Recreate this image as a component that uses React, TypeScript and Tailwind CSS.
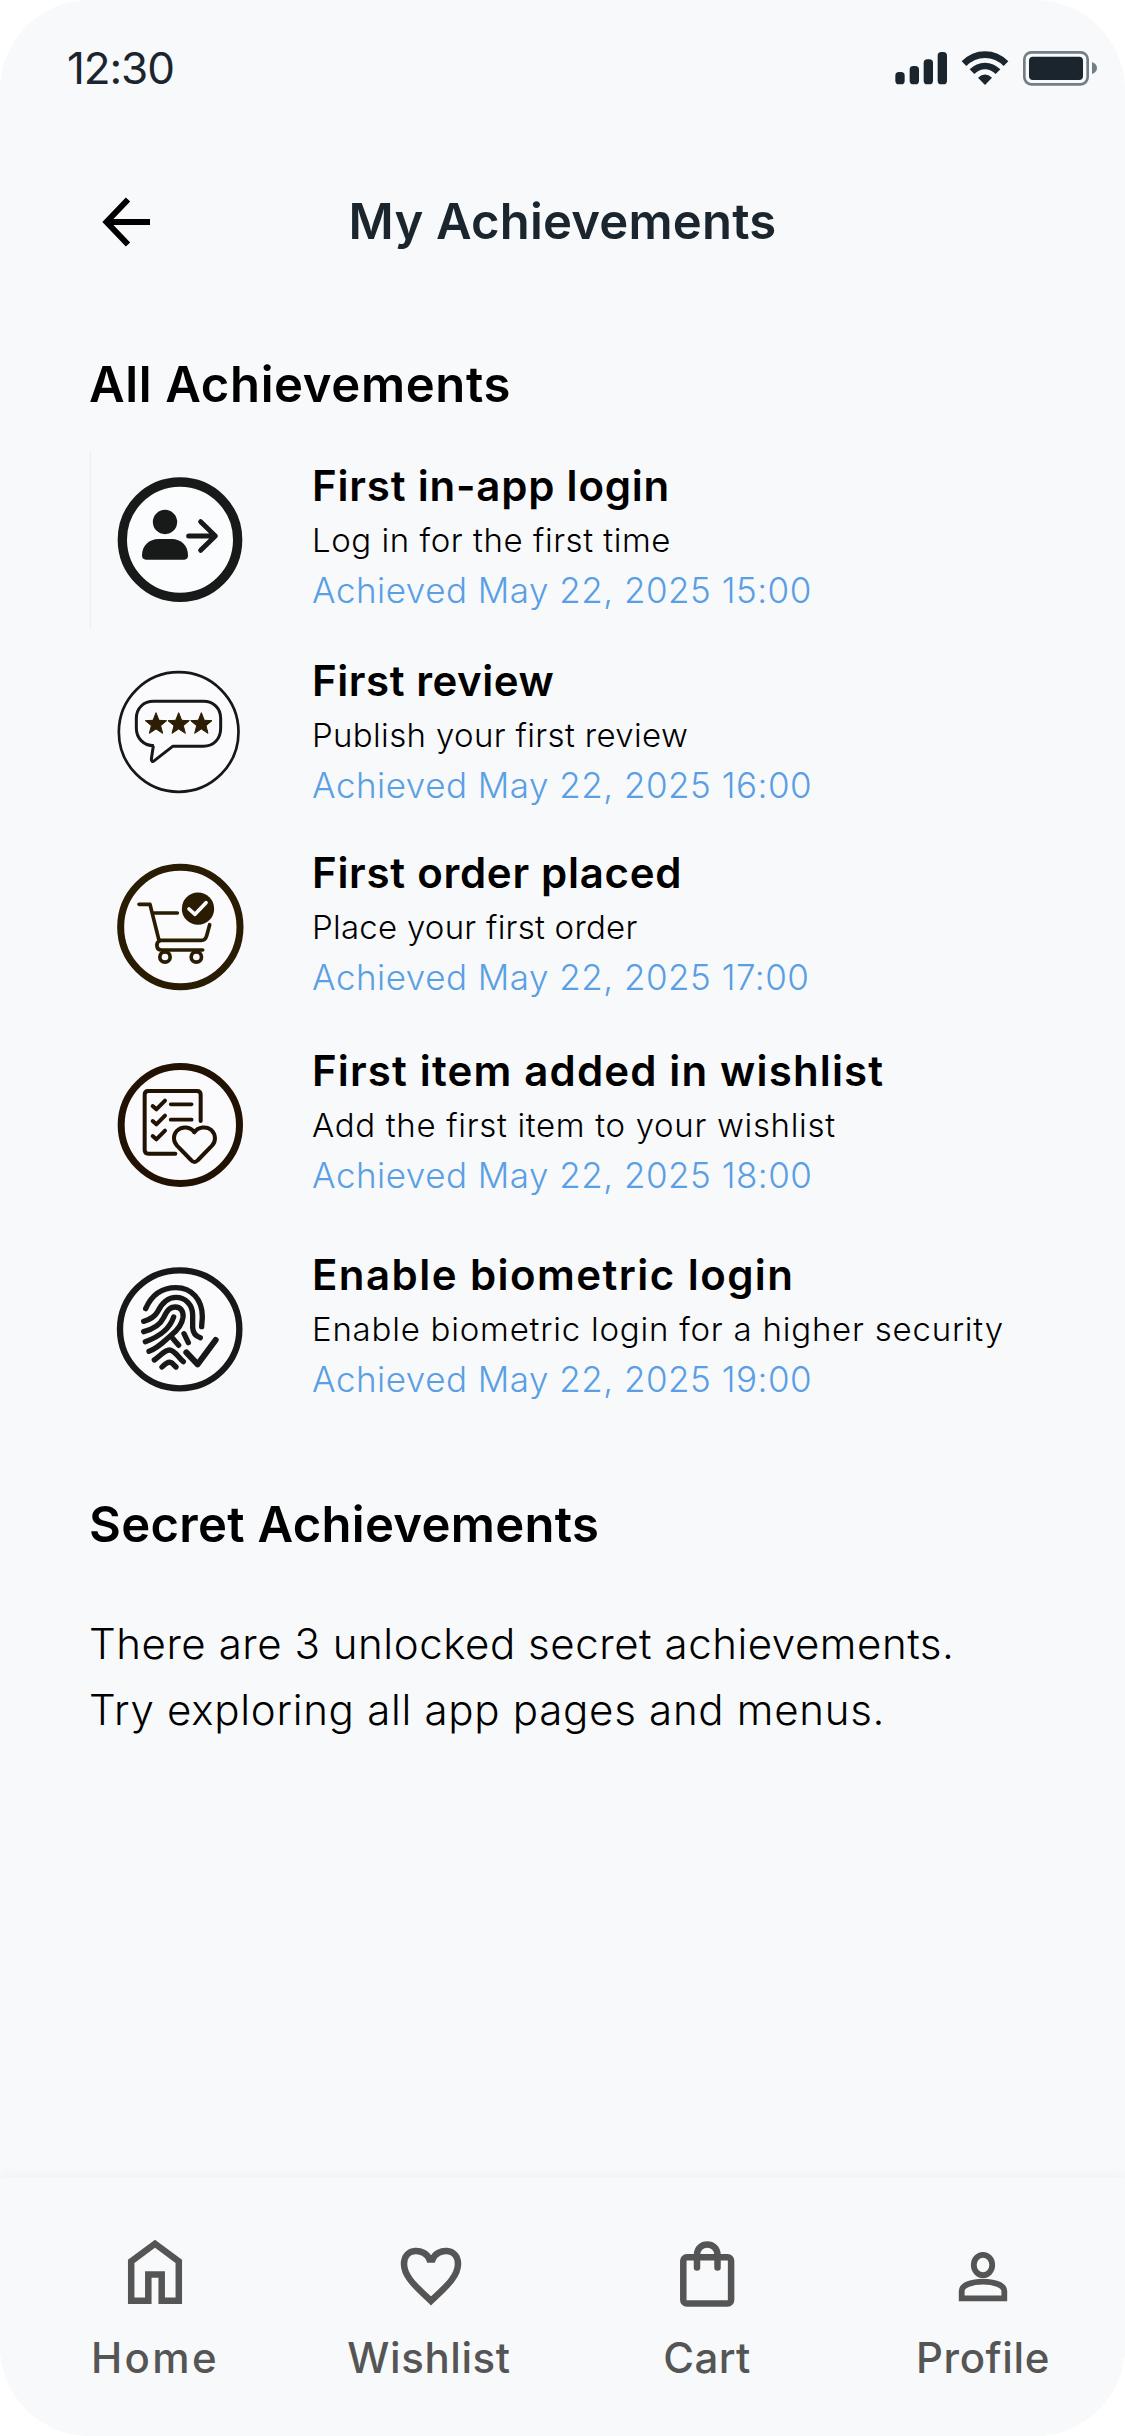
import type { ReactNode } from "react";

type Achievement = {
  title: string;
  titleTracking: string;
  text: string;
  textTracking: string;
  time: string;
  height: string;
  icon: ReactNode;
};

function StatusIcons() {
  return (
    <svg className="h-[40px] w-[208px]" viewBox="96 84 624 120">
      <g fill="#1b252e">
        <rect x="106" y="156" width="28" height="37" rx="11" />
        <rect x="149" y="138" width="28" height="55" rx="11" />
        <rect x="191" y="118" width="28" height="75" rx="11" />
        <rect x="233" y="96" width="28" height="97" rx="11" />
        <path d="M354 173Q375 154 396 173L375 195Z" />
        <rect x="507" y="110" width="162" height="70" rx="12" />
      </g>
      <g fill="none" stroke="#1b252e" strokeWidth="20">
        <path d="M312 131Q339 104 375 104T438 131" />
        <path d="M336 155Q353 138 375 138T414 155" />
      </g>
      <rect x="493" y="97" width="190" height="96" rx="21" fill="none" stroke="#727e84" strokeWidth="8" />
      <path d="M696 126Q711 132 711 144T696 162Z" fill="#727e84" />
    </svg>
  );
}

function LoginIcon() {
  return (
    <svg className="-ml-[20px] mt-[2px] h-[180px] w-[200px]" viewBox="0 30 600 540">
      <path d="M31 30V570" stroke="#ebecee" strokeWidth="3" />
      <circle cx="300" cy="299" r="173" fill="#fbfcfd" stroke="#181a19" strokeWidth="28" />
      <g fill="#181a19">
        <circle cx="255" cy="246" r="36.500" />
        <path d="M186 346C186 316 208 297 236 297H275C303 297 324 316 324 346Q324 359 313 359H198Q186 359 186 346Z" />
      </g>
      <path d="M326 288H405M362 245L406 288L362 331" fill="none" stroke="#181a19" strokeWidth="15" strokeLinecap="round" strokeLinejoin="round" />
    </svg>
  );
}

const STAR = "M0-33 9-10 32-9 14 6 20 29 0 16-20 29-14 6-32-9-9-10Z";

function ReviewIcon() {
  return (
    <svg className="mt-[12px] h-[150px] w-[160px]" viewBox="0 0 480 450">
      <circle cx="236" cy="231" r="179.500" fill="#fbfbfd" stroke="#171717" strokeWidth="8" />
      <path
        d="M162 272C130 272 109 249 109 219V190C109 159 131 139 161 139H310C341 139 362 160 362 190V220C362 252 341 274 310 274H218L163 317Q154 323 154 313L160 272"
        fill="none"
        stroke="#171717"
        strokeWidth="9"
        strokeLinejoin="round"
      />
      <g fill="#2c1d04" stroke="#2c1d04" strokeWidth="3" strokeLinejoin="round">
        <path d={STAR} transform="translate(168 206)" />
        <path d={STAR} transform="translate(236 206)" />
        <path d={STAR} transform="translate(304 206)" />
      </g>
    </svg>
  );
}

function OrderIcon() {
  return (
    <svg className="mt-[15px] h-[150px] w-[160px]" viewBox="0 0 480 450">
      <circle cx="241" cy="231" r="179" fill="#fbfbfd" stroke="#291c03" strokeWidth="21" />
      <g fill="none" stroke="#291c03" strokeWidth="11" strokeLinecap="round" strokeLinejoin="round">
        <path d="M117 163H150L177 271H304Q316 271 320 257L329 224" />
        <path d="M162 189H232M180 272C166 278 168 300 184 300H308" />
        <circle cx="195" cy="321" r="15.500" />
        <circle cx="289" cy="321" r="15.500" />
      </g>
      <circle cx="294" cy="176" r="53" fill="#fbfbfd" />
      <circle cx="294" cy="176" r="48.500" fill="#291c03" />
      <path d="M267 177L285 193L318 158" fill="none" stroke="#fbfbfd" strokeWidth="11" strokeLinecap="round" strokeLinejoin="round" />
    </svg>
  );
}

function WishlistAddedIcon() {
  return (
    <svg className="mt-[17px] h-[150px] w-[160px]" viewBox="0 0 480 450">
      <ellipse cx="241" cy="225" rx="177.500" ry="175.500" fill="#fbfbfd" stroke="#211204" strokeWidth="21" />
      <g fill="none" stroke="#211204" strokeWidth="12" strokeLinecap="round" strokeLinejoin="round">
        <path d="M302 213V134Q302 123 291 123H145Q134 123 134 134V300Q134 311 145 311H226" />
        <path d="M212 163H275M212 209H275" strokeWidth="11" />
        <path d="M158 168L169 178L195 152M158 213L169 223L195 197M158 258L169 268L195 242" />
        <path d="M283 247C272 229 245 227 230 243C219 256 219 274 231 287L273 330Q283 342 294 330L336 287C349 274 347 253 335 241C319 227 294 231 283 247Z" />
      </g>
    </svg>
  );
}

function BiometricIcon() {
  return (
    <svg className="mt-[18px] h-[150px] w-[160px]" viewBox="0 0 480 450">
      <ellipse cx="239" cy="223" rx="179" ry="177" fill="#fbfbfd" stroke="#181818" strokeWidth="19" />
      <g fill="none" stroke="#181818" strokeWidth="16" strokeLinecap="round" strokeLinejoin="round">
        <path d="M137 161C155 120 187 98 228 98C275 98 307 134 307 185C307 195 305 205 305 215" />
        <path d="M131 199C151 194 163 187 173 170C187 141 203 127 228 127C256 127 278 149 278 180V218Q279 241 301 248" />
        <path d="M131 230C158 223 181 209 191 188C201 167 209 156 226 156C242 156 251 169 249 187C246 208 232 226 213 241C194 257 174 280 147 289" />
        <path d="M136 260C173 247 207 228 221 186" />
        <path d="M218 250L236 271M252 236L265 263" />
        <path d="M163 315C181 302 195 285 208 285C224 285 236 309 250 320" />
        <path d="M186 336Q206 315 217 325L228 336" />
        <path d="M259 292L293 328L347 255" strokeWidth="18" />
      </g>
    </svg>
  );
}

const achievements: Achievement[] = [
  {
    title: "First in-app login",
    titleTracking: "tracking-[0.800px]",
    text: "Log in for the first time",
    textTracking: "tracking-[0.550px]",
    time: "May 22, 2025 15:00",
    height: "h-[195px]",
    icon: <LoginIcon />,
  },
  {
    title: "First review",
    titleTracking: "tracking-[0.550px]",
    text: "Publish your first review",
    textTracking: "tracking-[0.350px]",
    time: "May 22, 2025 16:00",
    height: "h-[192px]",
    icon: <ReviewIcon />,
  },
  {
    title: "First order placed",
    titleTracking: "tracking-[0.720px]",
    text: "Place your first order",
    textTracking: "tracking-[0.250px]",
    time: "May 22, 2025 17:00",
    height: "h-[198px]",
    icon: <OrderIcon />,
  },
  {
    title: "First item added in wishlist",
    titleTracking: "tracking-[1.160px]",
    text: "Add the first item to your wishlist",
    textTracking: "tracking-[0.680px]",
    time: "May 22, 2025 18:00",
    height: "h-[204px]",
    icon: <WishlistAddedIcon />,
  },
  {
    title: "Enable biometric login",
    titleTracking: "tracking-[1.440px]",
    text: "Enable biometric login for a higher security",
    textTracking: "tracking-[0.780px]",
    time: "May 22, 2025 19:00",
    height: "h-[190px]",
    icon: <BiometricIcon />,
  },
];

function AchievementRow({ item }: { item: Achievement }) {
  return (
    <li className={`flex pl-[100px] ${item.height}`}>
      <div className="flex w-[212px] shrink-0 items-start">{item.icon}</div>
      <div className="pt-[13px] whitespace-nowrap">
        <h3 className={`mb-[5px] text-[42px] leading-[49px] font-semibold ${item.titleTracking}`}>{item.title}</h3>
        <p className={`text-[33px] leading-[50px] font-[350] ${item.textTracking}`}>{item.text}</p>
        <p className="text-[35px] leading-[51px] font-light tracking-[0.500px] text-[#5a9fe4]">Achieved {item.time}</p>
      </div>
    </li>
  );
}

const navItems: { label: string; text: string; icon: ReactNode }[] = [
  {
    label: "Home",
    text: "tracking-[2.400px]",
    icon: <path d="M21.200 70.700V31.500L45 13.700L68.800 31.500V70.700H51.700V44.500H38.300V70.700Z" />,
  },
  {
    label: "Wishlist",
    text: "mr-1 tracking-[0.600px]",
    icon: <path d="M45 71C31 57.500 18 47 18 34C18 17 39 18 43.500 29.500H46.500C51 18 72 17 72 34C72 47 59 57.500 45 71Z" />,
  },
  {
    label: "Cart",
    text: "tracking-[0.400px]",
    icon: (
      <>
        <rect x="21.300" y="27.300" width="47.800" height="46.200" rx="3.500" />
        <path d="M35 37.500V25C35 11 55.500 11 55.500 25V37.500" strokeLinecap="round" />
      </>
    ),
  },
  {
    label: "Profile",
    text: "tracking-[0.600px]",
    icon: (
      <g strokeWidth="5.800">
        <ellipse cx="45" cy="35" rx="9.200" ry="10.200" />
        <path d="M23.700 68.300V61C23.700 48.500 66.300 48.500 66.300 61V68.300Z" />
      </g>
    ),
  },
];

export default function App() {
  return (
    <div className="bg-white">
      <div className="flex h-[2436px] w-[1125px] flex-col overflow-hidden rounded-[90px] bg-[#f8f9fb] font-['Inter',sans-serif] text-black">
        <div className="flex h-[136px] shrink-0 items-center justify-between pr-[25px] pl-[67px]">
          <span className="text-[44px] leading-none tracking-[-1.100px] text-[#1b252e]">12:30</span>
          <StatusIcons />
        </div>

        <header className="mt-[39px] grid h-[96px] shrink-0 grid-cols-[240px_1fr_240px] items-center">
          <svg className="ml-[96px] h-[60px] w-[60px]" viewBox="0 0 60 60" fill="none" stroke="#000" strokeWidth="6">
            <path d="M54 29H11M32 6.500L10.500 29L32 51.500" />
          </svg>
          <h1 className="pb-[3px] text-center text-[49px] leading-none font-semibold tracking-[0.200px] whitespace-nowrap text-[#1b252e]">
            My Achievements
          </h1>
        </header>

        <main className="pt-[84px]">
          <h2 className="mb-[33px] pl-[89px] text-[49px] leading-[60px] font-semibold tracking-[0.650px]">All Achievements</h2>
          <ul>
            {achievements.map((item) => (
              <AchievementRow key={item.title} item={item} />
            ))}
          </ul>
          <section className="mt-[68px] pl-[89px]">
            <h2 className="mb-[56px] text-[49px] leading-[60px] font-semibold tracking-[0.300px]">Secret Achievements</h2>
            <p className="text-[42px] leading-[66px] font-[330] tracking-[0.550px]">There are 3 unlocked secret achievements.</p>
            <p className="text-[42px] leading-[66px] font-[330] tracking-[0.720px]">Try exploring all app pages and menus.</p>
          </section>
        </main>

        <nav className="mt-auto grid h-[258px] shrink-0 grid-cols-4 bg-[#f8f9fb] pt-[52px] pr-[4px] pl-[17px] shadow-[0_-2px_12px_rgba(0,0,0,0.04)]">
          {navItems.map((item) => (
            <a key={item.label} className="flex flex-col items-center">
              <svg className="h-[90px] w-[90px]" viewBox="0 0 90 90" fill="none" stroke="#555555" strokeWidth="6.500">
                {item.icon}
              </svg>
              <span className={`mt-[14px] text-[42px] leading-[48px] font-medium text-[#555555] ${item.text}`}>{item.label}</span>
            </a>
          ))}
        </nav>
      </div>
    </div>
  );
}
